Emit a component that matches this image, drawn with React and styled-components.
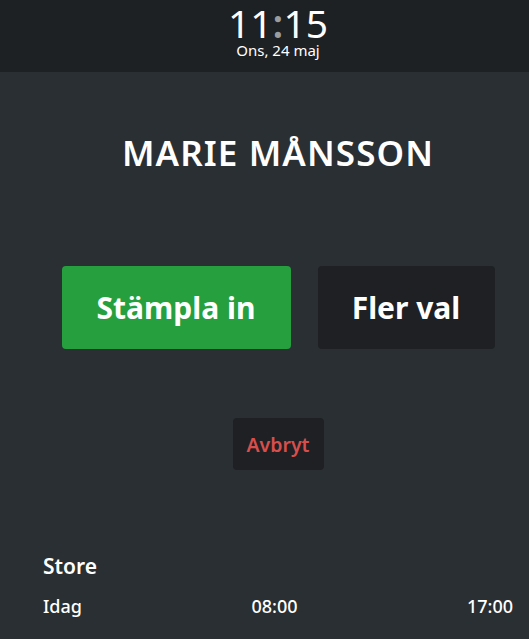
import React from "react";
import styled, { createGlobalStyle } from "styled-components";

const Global = createGlobalStyle`
  html, body { margin: 0; padding: 0; background: #2a2f33; }
  body { font-family: "Noto Sans", "Liberation Sans", sans-serif; color: #fff; overflow: hidden; }
  * { box-sizing: border-box; }
`;

const Page = styled.div`
  width: 529px;
  height: 639px;
  background: #2a2f33;
  display: flex;
  flex-direction: column;
`;

const Header = styled.header`
  height: 72px;
  background: #1e2124;
  padding: 4px 16px 0 43px;
  display: flex;
  flex-direction: column;
  align-items: center;
`;

const Clock = styled.div`
  font-family: "Noto Sans", "Open Sans", sans-serif;
  font-weight: 400;
  font-size: 39px;
  line-height: 38px;
`;

const Colon = styled.span`
  color: #9a9da0;
  font-weight: 600;
`;

const DateText = styled.div`
  font-size: 15px;
  line-height: 16px;
`;

const Main = styled.main`
  flex: 1;
  padding: 0 16px 0 43px;
  display: flex;
  flex-direction: column;
`;

const Name = styled.h1`
  margin: 0;
  margin-top: 59px;
  text-align: center;
  font-size: 35px;
  line-height: 44px;
  font-weight: 600;
  letter-spacing: 1.1px;
`;

const ButtonRow = styled.div`
  display: flex;
  justify-content: center;
  gap: 27px;
  margin-top: 91px;
`;

const BigButton = styled.button`
  width: ${p => p.$w}px;
  height: 83px;
  border: none;
  border-radius: 4px;
  background: ${p => (p.$primary ? "#26a03e" : "#1e2023")};
  color: #fff;
  font-family: inherit;
  font-weight: 700;
  font-size: 30px;
`;

const CancelWrap = styled.div`
  display: flex;
  justify-content: center;
  margin-top: 69px;
`;

const Cancel = styled.button`
  width: 91px;
  height: 52px;
  border: none;
  border-radius: 4px;
  background: #1e2023;
  color: #d64f4c;
  font-family: inherit;
  font-weight: 600;
  font-size: 19.5px;
`;

const Section = styled.div`
  margin-top: 82px;
`;

const SectionTitle = styled.div`
  font-size: 21px;
  font-weight: 600;
  line-height: 28px;
`;

const ScheduleRow = styled.div`
  display: flex;
  justify-content: space-between;
  margin-top: 14px;
  font-size: 18px;
  line-height: 24px;
  font-weight: 500;
`;

export default function App() {
  return (
    <Page>
      <Global />
      <Header>
        <Clock>11<Colon>:</Colon>15</Clock>
        <DateText>Ons, 24 maj</DateText>
      </Header>
      <Main>
        <Name>MARIE MÅNSSON</Name>
        <ButtonRow>
          <BigButton $primary $w={229}>Stämpla in</BigButton>
          <BigButton $w={177}>Fler val</BigButton>
        </ButtonRow>
        <CancelWrap>
          <Cancel>Avbryt</Cancel>
        </CancelWrap>
        <Section>
          <SectionTitle>Store</SectionTitle>
          <ScheduleRow>
            <span>Idag</span>
            <span>08:00</span>
            <span>17:00</span>
          </ScheduleRow>
        </Section>
      </Main>
    </Page>
  );
}
